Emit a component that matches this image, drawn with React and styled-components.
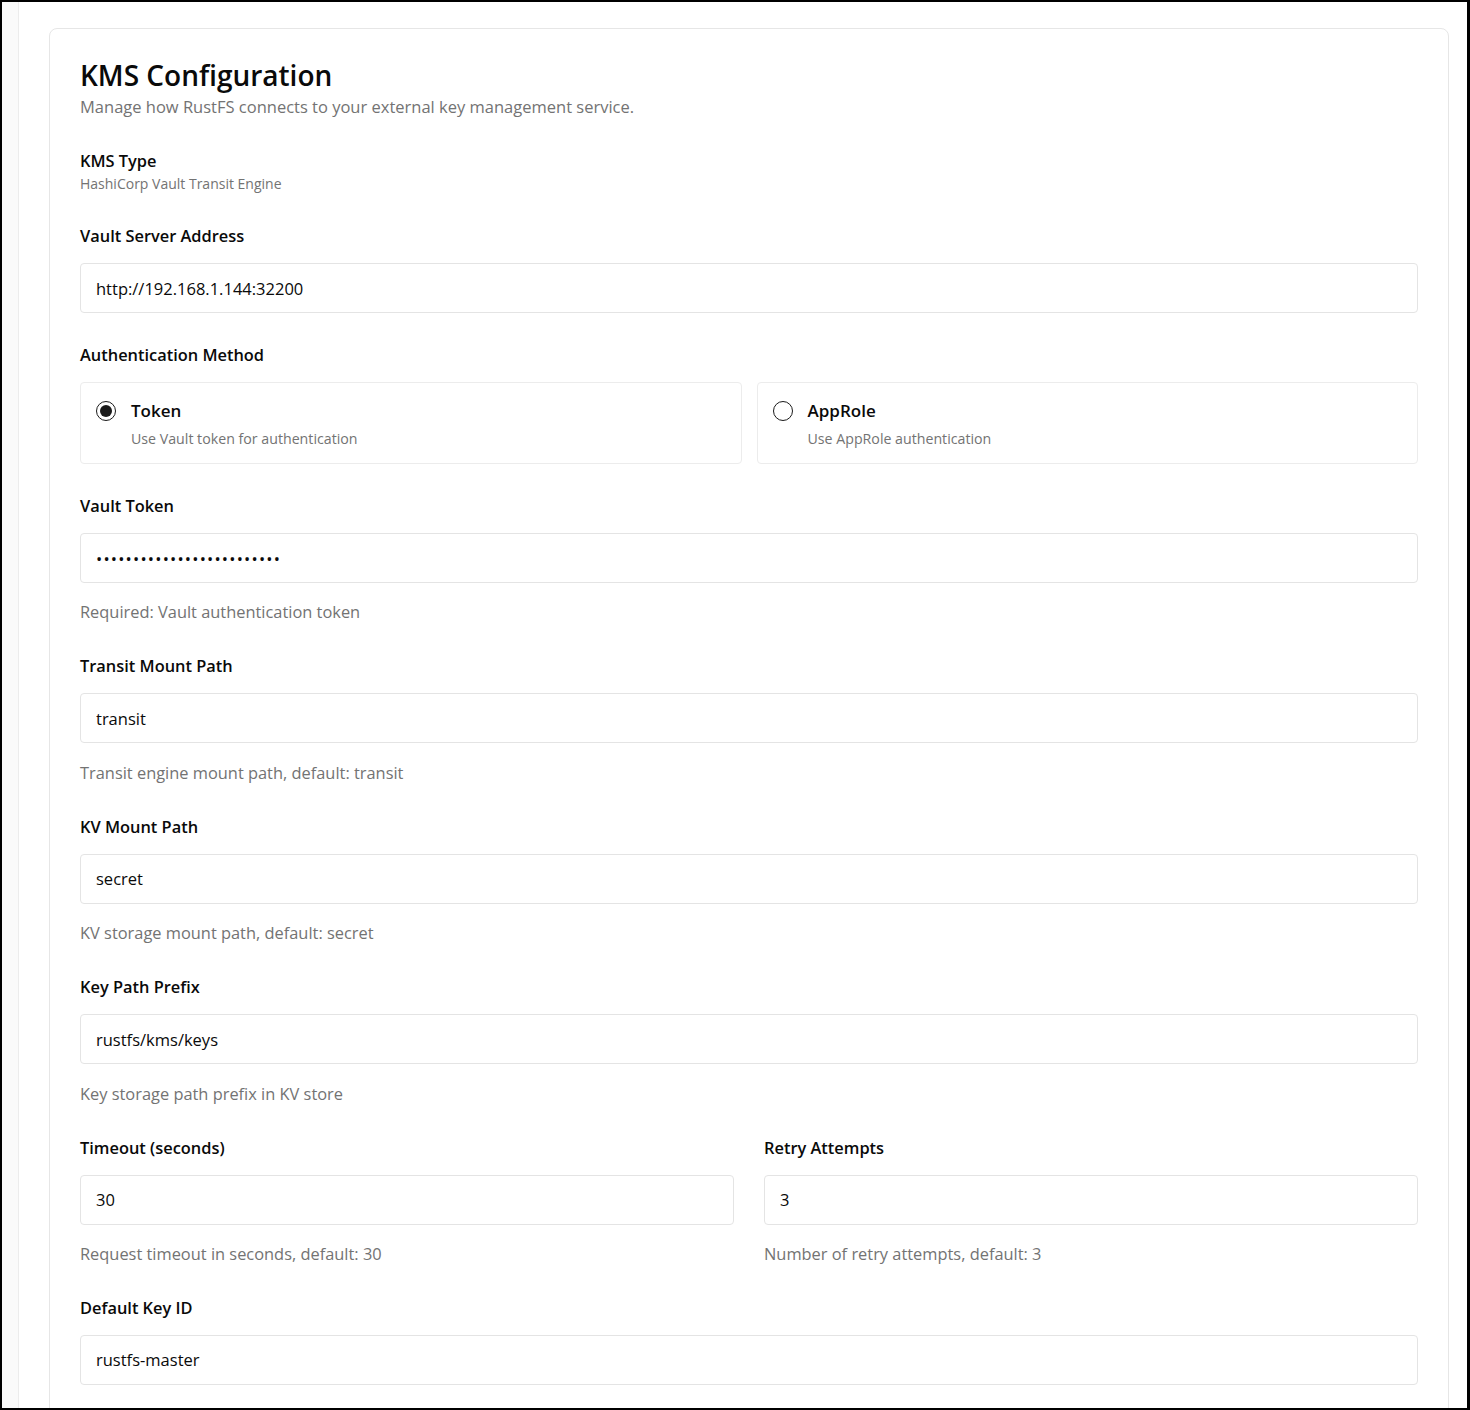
import React from 'react';
import styled, { createGlobalStyle } from 'styled-components';

const GlobalStyle = createGlobalStyle`
  * { box-sizing: border-box; }
  body {
    margin: 0;
    font-family: "Open Sans", "Noto Sans", sans-serif;
    color: #0a0a0a;
    background: #fff;
  }
`;

const Frame = styled.div`
  width: 1470px;
  height: 1410px;
  border: 2px solid #000;
  border-right-width: 3px;
  display: flex;
  overflow: hidden;
  background: #fff;
`;

const SideStrip = styled.div`
  width: 17px;
  flex-shrink: 0;
  background: #fafafa;
  border-right: 1px solid #ececec;
`;

const Main = styled.main`
  flex: 1;
  padding: 26px 18px 0 30px;
`;

const Card = styled.section`
  border: 1px solid #e6e6e6;
  border-radius: 8px;
  padding: 30px 30px 40px;
  display: flex;
  flex-direction: column;
  gap: 30px;
`;

const Header = styled.div`
  display: flex;
  flex-direction: column;
`;

const Title = styled.h1`
  margin: 0 0 4px;
  font-size: 28px;
  line-height: 32px;
  font-weight: 600;
  color: #0a0a0a;
`;

const Subtitle = styled.p`
  margin: 0;
  font-size: 16.5px;
  line-height: 24px;
  color: #737373;
`;

const Field = styled.div`
  display: flex;
  flex-direction: column;
`;

const Label = styled.label`
  font-size: 16.4px;
  line-height: 24px;
  font-weight: 600;
  color: #0a0a0a;
  margin-bottom: ${p => (p.$tight ? '1px' : '15px')};
`;

const SubLabel = styled.div`
  font-size: 14px;
  line-height: 20px;
  color: #737373;
`;

const Input = styled.input`
  width: 100%;
  height: 50px;
  border: 1px solid #e4e4e4;
  border-radius: 4px;
  padding: 0 15px;
  font-family: inherit;
  font-size: 16.5px;
  letter-spacing: ${p => (p.type === 'password' ? '1.2px' : 'normal')};
  color: #0a0a0a;
  background: #fff;
  outline: none;
`;

const Help = styled.div`
  margin-top: 17.4px;
  font-size: 16.4px;
  line-height: 24px;
  color: #737373;
`;

const Columns = styled.div`
  display: grid;
  grid-template-columns: 1fr 1fr;
  gap: ${p => p.$gap || '30px'};
`;

const OptionCard = styled.label`
  display: flex;
  gap: 15px;
  align-items: flex-start;
  padding: 16px 15px 14px;
  border: 1px solid #ececec;
  border-radius: 4px;
  cursor: pointer;
`;

const Radio = styled.span`
  width: 20px;
  height: 20px;
  margin-top: 2px;
  flex-shrink: 0;
  border-radius: 50%;
  border: 1.5px solid #1a1a1a;
  display: flex;
  align-items: center;
  justify-content: center;

  &::after {
    content: '';
    width: 12px;
    height: 12px;
    border-radius: 50%;
    background: #1a1a1a;
    display: ${p => (p.$checked ? 'block' : 'none')};
  }
`;

const OptionText = styled.div`
  display: flex;
  flex-direction: column;
  gap: 6px;
`;

const OptionTitle = styled.div`
  font-size: 17px;
  line-height: 24px;
  font-weight: 600;
`;

const OptionDesc = styled.div`
  font-size: 14.2px;
  line-height: 20px;
  color: #737373;
`;

const TextField = ({ label, value, help, type = 'text' }) => (
  <Field>
    <Label>{label}</Label>
    <Input type={type} defaultValue={value} />
    {help && <Help>{help}</Help>}
  </Field>
);

const authOptions = [
  { id: 'token', title: 'Token', desc: 'Use Vault token for authentication', checked: true },
  { id: 'approle', title: 'AppRole', desc: 'Use AppRole authentication', checked: false },
];

export default function App() {
  return (
    <>
      <GlobalStyle />
      <Frame>
        <SideStrip />
        <Main>
          <Card>
            <Header>
              <Title>KMS Configuration</Title>
              <Subtitle>Manage how RustFS connects to your external key management service.</Subtitle>
            </Header>

            <Field>
              <Label $tight>KMS Type</Label>
              <SubLabel>HashiCorp Vault Transit Engine</SubLabel>
            </Field>

            <TextField label="Vault Server Address" value="http://192.168.1.144:32200" />

            <Field>
              <Label>Authentication Method</Label>
              <Columns $gap="15px">
                {authOptions.map(o => (
                  <OptionCard key={o.id}>
                    <Radio $checked={o.checked} />
                    <OptionText>
                      <OptionTitle>{o.title}</OptionTitle>
                      <OptionDesc>{o.desc}</OptionDesc>
                    </OptionText>
                  </OptionCard>
                ))}
              </Columns>
            </Field>

            <TextField
              label="Vault Token"
              type="password"
              value="hvs.CAESIJ0wXyZ1234567890"
              help="Required: Vault authentication token"
            />
            <TextField
              label="Transit Mount Path"
              value="transit"
              help="Transit engine mount path, default: transit"
            />
            <TextField
              label="KV Mount Path"
              value="secret"
              help="KV storage mount path, default: secret"
            />
            <TextField
              label="Key Path Prefix"
              value="rustfs/kms/keys"
              help="Key storage path prefix in KV store"
            />

            <Columns>
              <TextField
                label="Timeout (seconds)"
                value="30"
                help="Request timeout in seconds, default: 30"
              />
              <TextField
                label="Retry Attempts"
                value="3"
                help="Number of retry attempts, default: 3"
              />
            </Columns>

            <TextField
              label="Default Key ID"
              value="rustfs-master"
              help="Default master key ID for SSE-KMS"
            />
          </Card>
        </Main>
      </Frame>
    </>
  );
}
